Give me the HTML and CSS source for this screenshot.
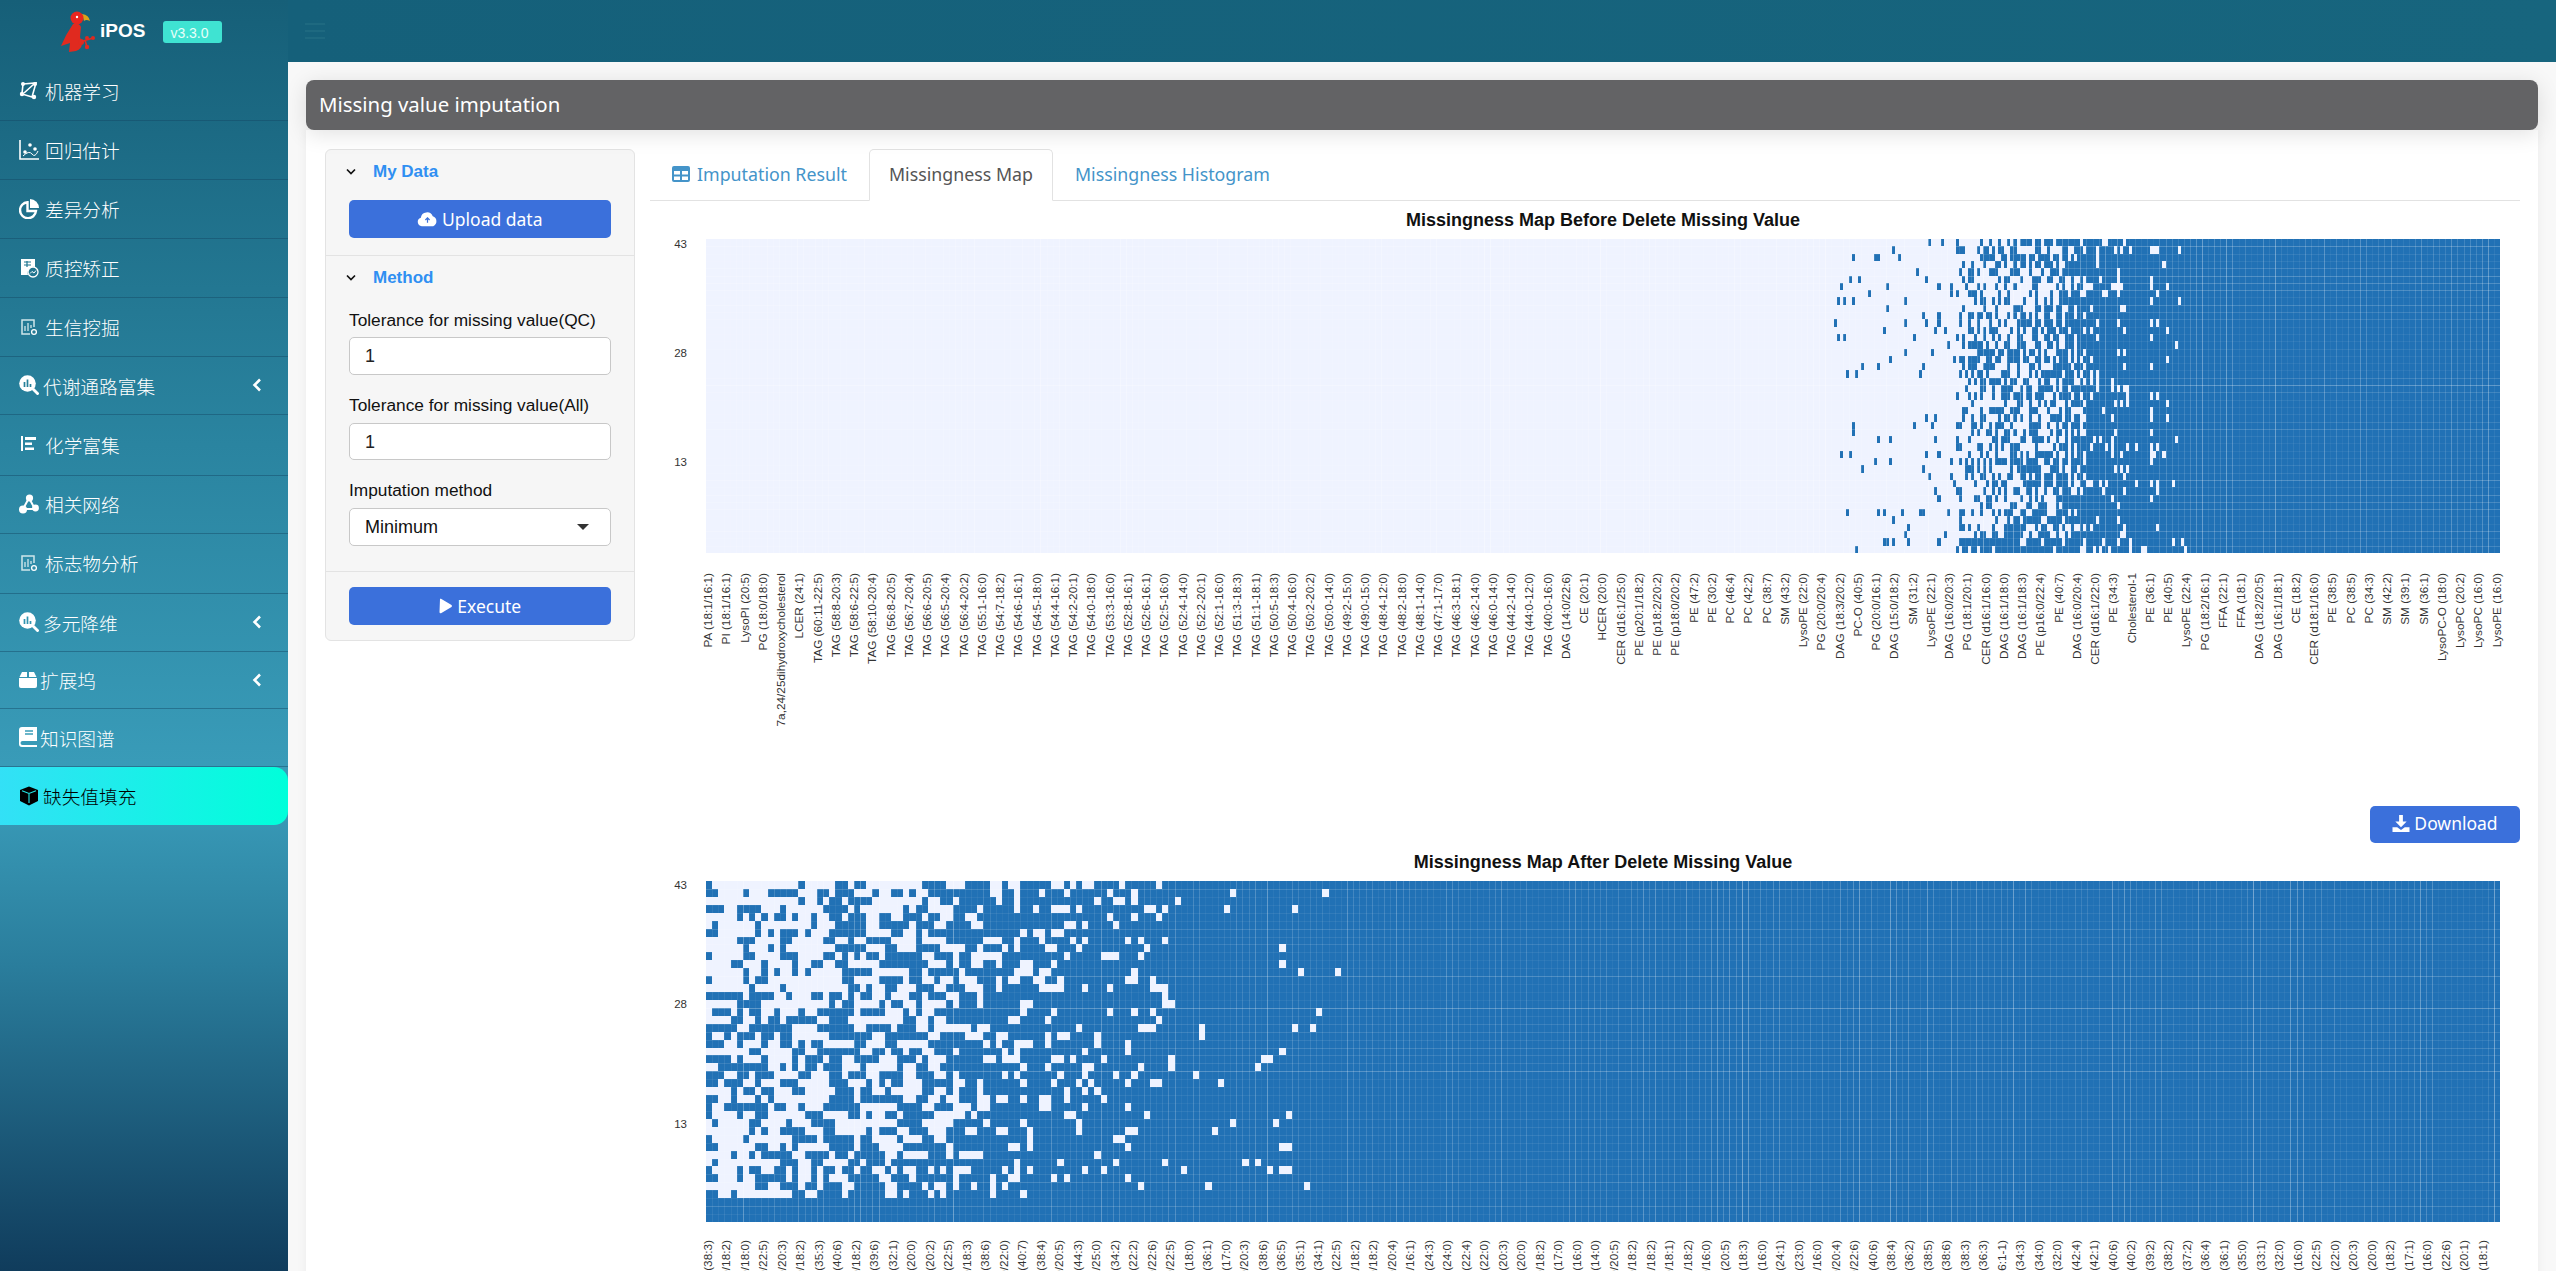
FILE: index.html
```html
<!DOCTYPE html>
<html lang="en">
<head>
<meta charset="utf-8">
<title>iPOS - Missing value imputation</title>
<link rel="stylesheet" href="styles.css">
</head>
<body>
<aside class="side">
  <div class="brand">
    <svg class="parrot" viewBox="0 0 36 42" width="36" height="42"><path d="M22 3 q7 1 8 7 q-4 -2 -6 0z" fill="#d9a21c"/><circle cx="17" cy="7" r="6.500" fill="#e8261f"/><circle cx="17" cy="6" r="1.200" fill="#fff"/><path d="M13 13 q6 -2 8 3 l-1 10 l2 6 q0 6 -6 8 l-7 1 l1 -9 l-9 3 q5 -12 12 -22z" fill="#e02a1f"/><path d="M20 31 L33 27 M25 29 L27 36" stroke="#e02a1f" stroke-width="1.600"/><circle cx="21" cy="31" r="3" fill="#e02a1f"/><circle cx="27" cy="27" r="2" fill="#e02a1f"/><circle cx="33" cy="27" r="2" fill="#e02a1f"/><circle cx="27" cy="36" r="2.200" fill="#e02a1f"/></svg>
    <span class="brand-name">iPOS</span>
    <span class="badge">v3.3.0</span>
  </div>
  <nav class="menu">
    <a class="item"><svg class="ico" viewBox="0 0 20 20"><path d="M4 3 L17 2 L13 16 L3 13z M15 3 L5 12" fill="none" stroke="#fff" stroke-width="1.600"/><circle cx="4" cy="3" r="2" fill="#fff"/><circle cx="16" cy="3" r="2" fill="#fff"/><circle cx="3" cy="13" r="2.200" fill="#fff"/><circle cx="15" cy="16" r="2.200" fill="#fff"/></svg><span>机器学习</span></a>
    <a class="item"><svg class="ico" viewBox="0 0 20 20"><path d="M1 0 V19 H20" fill="none" stroke="#fff" stroke-width="1.600"/><circle cx="6" cy="12" r="1.800" fill="#fff"/><circle cx="11" cy="5" r="1.800" fill="#fff"/><circle cx="16" cy="9" r="1.800" fill="#fff"/><path d="M4 16 Q10 10 13 14 T19 11" fill="none" stroke="#fff" stroke-width="1"/></svg><span>回归估计</span></a>
    <a class="item"><svg class="ico" viewBox="0 0 20 20"><path d="M8.500 3.200 A8 8 0 1 0 17 12 H8.500z" fill="none" stroke="#fff" stroke-width="2.400"/><path d="M11 0 A9 9 0 0 1 20 9 H11z" fill="#fff"/></svg><span>差异分析</span></a>
    <a class="item"><svg class="ico" viewBox="0 0 20 20"><path d="M2 1 H16 V9 A6 6 0 0 0 9 17 H2z" fill="#fff"/><path d="M5 4 H12 M5 7 H12 M8 3 V9" stroke="#1f7690" stroke-width="1.200"/><circle cx="14" cy="14" r="5" fill="none" stroke="#fff" stroke-width="1.300"/><path d="M11 15.500 L13 13.500 L15 15 L17 12.500" fill="none" stroke="#fff" stroke-width="1"/></svg><span>质控矫正</span></a>
    <a class="item"><svg class="ico" viewBox="0 0 20 20"><path d="M15 10 V3 H3 V17 H11" fill="none" stroke="#cfe6ea" stroke-width="1.500"/><path d="M6 9 V14 M9 6 V14 M12 8 V11" stroke="#cfe6ea" stroke-width="1.300"/><circle cx="15" cy="15" r="2.400" fill="none" stroke="#fff" stroke-width="1.300"/></svg><span>生信挖掘</span></a>
    <a class="item short t43"><svg class="ico" viewBox="0 0 20 20"><circle cx="8.500" cy="8.500" r="8.300" fill="#fff"/><path d="M5.500 7 V12 M8.500 4.500 V12 M11.500 9 V12" stroke="#26809a" stroke-width="1.700"/><path d="M14 14 L19.500 19.500" stroke="#fff" stroke-width="2.800"/></svg><span>代谢通路富集</span><svg class="chev" viewBox="0 0 10 14"><path d="M8 1.500 L2.500 7 L8 12.500" fill="none" stroke="#fff" stroke-width="2.600"/></svg></a>
    <a class="item tall"><svg class="ico" viewBox="0 0 20 20"><path d="M2 2 H4 V17 H2z M6 3 H17 V6 H6z M6 8.500 H13 V11 H6z M6 13.500 H15 V16 H6z" fill="#fff"/></svg><span>化学富集</span></a>
    <a class="item short"><svg class="ico" viewBox="0 0 20 20"><path d="M10 4 L4 15 H16z" fill="none" stroke="#fff" stroke-width="2"/><circle cx="10.500" cy="4" r="3.600" fill="#fff"/><circle cx="4" cy="15.500" r="4" fill="#fff"/><circle cx="16.500" cy="14" r="3.400" fill="#fff"/></svg><span>相关网络</span></a>
    <a class="item tall"><svg class="ico" viewBox="0 0 20 20"><path d="M15 10 V3 H3 V17 H11" fill="none" stroke="#cfe6ea" stroke-width="1.500"/><path d="M6 9 V14 M9 6 V14 M12 8 V11" stroke="#cfe6ea" stroke-width="1.300"/><circle cx="15" cy="15" r="2.400" fill="none" stroke="#fff" stroke-width="1.300"/></svg><span>标志物分析</span></a>
    <a class="item short t43"><svg class="ico" viewBox="0 0 20 20"><circle cx="8.500" cy="8.500" r="8.300" fill="#fff"/><path d="M5.500 7 V12 M8.500 4.500 V12 M11.500 9 V12" stroke="#3194b0" stroke-width="1.700"/><path d="M14 14 L19.500 19.500" stroke="#fff" stroke-width="2.800"/></svg><span>多元降维</span><svg class="chev" viewBox="0 0 10 14"><path d="M8 1.500 L2.500 7 L8 12.500" fill="none" stroke="#fff" stroke-width="2.600"/></svg></a>
    <a class="item shorter t41"><svg class="ico wide" viewBox="0 0 18 18"><path d="M3 1 H8 V6 H0.500z M10 1 H15 L17.500 6 H10z M0 7 H18 V15 a2 2 0 0 1 -2 2 H2 a2 2 0 0 1 -2 -2z" fill="#fff"/></svg><span>扩展坞</span><svg class="chev" viewBox="0 0 10 14"><path d="M8 1.500 L2.500 7 L8 12.500" fill="none" stroke="#fff" stroke-width="2.600"/></svg></a>
    <a class="item short t41"><svg class="ico wide" viewBox="0 0 18 20"><path d="M3 0 H18 V14 H3.500 a2 2 0 0 0 0 4 H18 V20 H3 a3 3 0 0 1 -3 -3 V3 a3 3 0 0 1 3 -3z" fill="#fff"/><path d="M6 4 H14 M6 7 H14" stroke="#3a9db9" stroke-width="1.400"/></svg><span>知识图谱</span></a>
    <a class="item active t43"><svg class="ico" viewBox="0 0 20 20"><path d="M10 0.500 L19 4 V15 L10 19.500 L1 15 V4z" fill="#000"/><path d="M3 4.800 L10 7.500 L17 4.800 M10 7.500 V17" fill="none" stroke="#23e8e8" stroke-width="1.100"/></svg><span>缺失值填充</span></a>
  </nav>
</aside>

<main class="main">
  <header class="topbar"><div class="burger"><i></i><i></i><i></i></div></header>
  <div class="page">
    <h1 class="page-title">Missing value imputation</h1>
    <section class="card">
      <div class="panel">
        <div class="acc">
          <div class="acc-head"><svg class="caret" viewBox="0 0 10 8"><path d="M1 1.500 L5 5.500 L9 1.500" fill="none" stroke="#111" stroke-width="1.700"/></svg><span>My Data</span></div>
          <button class="btn btn-full"><svg class="btn-ico" viewBox="0 0 22 16"><path d="M5 15.500 a4.500 4.500 0 0 1 -1 -8.800 a6.500 6.500 0 0 1 12.500 -1.500 a5.500 5.500 0 0 1 0.500 10.300z" fill="#fff"/><path d="M11 12 V7 M8.800 9 L11 6.800 L13.200 9" fill="none" stroke="#3b70db" stroke-width="1.300"/></svg>Upload data</button>
        </div>
        <div class="acc acc-method">
          <div class="acc-head"><svg class="caret" viewBox="0 0 10 8"><path d="M1 1.500 L5 5.500 L9 1.500" fill="none" stroke="#111" stroke-width="1.700"/></svg><span>Method</span></div>
          <label class="lbl">Tolerance for missing value(QC)</label>
          <div class="field">1</div>
          <label class="lbl">Tolerance for missing value(All)</label>
          <div class="field">1</div>
          <label class="lbl">Imputation method</label>
          <div class="field select">Minimum<b class="tri"></b></div>
        </div>
        <div class="acc acc-run">
          <button class="btn btn-full"><svg class="btn-ico play" viewBox="0 0 14 16"><path d="M1.500 1 Q1 0.500 2.500 0.800 L13 7 Q14 8 13 9 L2.500 15.200 Q1 15.500 1 14z" fill="#fff"/></svg>Execute</button>
        </div>
      </div>

      <div class="results">
        <div class="tabs">
          <a class="tab"><svg class="tab-ico" viewBox="0 0 18 16"><rect width="18" height="16" rx="2" fill="#4494c9"/><path d="M2 5 H8 V8.500 H2z M10 5 H16 V8.500 H10z M2 10.500 H8 V14 H2z M10 10.500 H16 V14 H10z" fill="#fff"/></svg>Imputation Result</a>
          <a class="tab on">Missingness Map</a>
          <a class="tab">Missingness Histogram</a>
        </div>

        <h2 class="chart-title">Missingness Map Before Delete Missing Value</h2>
        <div class="chart-row">
          <div class="ticks t-a"><span>43</span><span>28</span><span>13</span></div>
          <canvas id="before" class="heat" width="1794" height="314"></canvas>
        </div>
        <div class="labels l-a">
          <i>PA (18:1/16:1)</i><i>PI (18:1/16:1)</i><i>LysoPI (20:5)</i><i>PG (18:0/18:0)</i><i>7a,24/25dihydroxycholesterol</i><i>LCER (24:1)</i><i>TAG (60:11-22:5)</i><i>TAG (58:8-20:3)</i><i>TAG (58:6-22:5)</i><i>TAG (58:10-20:4)</i><i>TAG (56:8-20:5)</i><i>TAG (56:7-20:4)</i><i>TAG (56:6-20:5)</i><i>TAG (56:5-20:4)</i><i>TAG (56:4-20:2)</i><i>TAG (55:1-16:0)</i><i>TAG (54:7-18:2)</i><i>TAG (54:6-16:1)</i><i>TAG (54:5-18:0)</i><i>TAG (54:4-16:1)</i><i>TAG (54:2-20:1)</i><i>TAG (54:0-18:0)</i><i>TAG (53:3-16:0)</i><i>TAG (52:8-16:1)</i><i>TAG (52:6-16:1)</i><i>TAG (52:5-16:0)</i><i>TAG (52:4-14:0)</i><i>TAG (52:2-20:1)</i><i>TAG (52:1-16:0)</i><i>TAG (51:3-18:3)</i><i>TAG (51:1-18:1)</i><i>TAG (50:5-18:3)</i><i>TAG (50:4-16:0)</i><i>TAG (50:2-20:2)</i><i>TAG (50:0-14:0)</i><i>TAG (49:2-15:0)</i><i>TAG (49:0-15:0)</i><i>TAG (48:4-12:0)</i><i>TAG (48:2-18:0)</i><i>TAG (48:1-14:0)</i><i>TAG (47:1-17:0)</i><i>TAG (46:3-18:1)</i><i>TAG (46:2-14:0)</i><i>TAG (46:0-14:0)</i><i>TAG (44:2-14:0)</i><i>TAG (44:0-12:0)</i><i>TAG (40:0-16:0)</i><i>DAG (14:0/22:6)</i><i>CE (20:1)</i><i>HCER (20:0)</i><i>CER (d16:1/25:0)</i><i>PE (p20:1/18:2)</i><i>PE (p18:2/20:2)</i><i>PE (p18:0/20:2)</i><i>PE (47:2)</i><i>PE (30:2)</i><i>PC (46:4)</i><i>PC (42:2)</i><i>PC (38:7)</i><i>SM (43:2)</i><i>LysoPE (22:0)</i><i>PG (20:0/20:4)</i><i>DAG (18:3/20:2)</i><i>PC-O (40:5)</i><i>PG (20:0/16:1)</i><i>DAG (15:0/18:2)</i><i>SM (31:2)</i><i>LysoPE (22:1)</i><i>DAG (16:0/20:3)</i><i>PG (18:1/20:1)</i><i>CER (d16:1/16:0)</i><i>DAG (16:1/18:0)</i><i>DAG (16:1/18:3)</i><i>PE (p16:0/22:4)</i><i>PE (40:7)</i><i>DAG (16:0/20:4)</i><i>CER (d16:1/22:0)</i><i>PE (34:3)</i><i>Cholesterol-1</i><i>PE (36:1)</i><i>PE (40:5)</i><i>LysoPE (22:4)</i><i>PG (18:2/16:1)</i><i>FFA (22:1)</i><i>FFA (18:1)</i><i>DAG (18:2/20:5)</i><i>DAG (16:1/18:1)</i><i>CE (18:2)</i><i>CER (d18:1/16:0)</i><i>PE (38:5)</i><i>PC (38:5)</i><i>PC (34:3)</i><i>SM (42:2)</i><i>SM (39:1)</i><i>SM (36:1)</i><i>LysoPC-O (18:0)</i><i>LysoPC (20:2)</i><i>LysoPC (16:0)</i><i>LysoPE (16:0)</i>
        </div>

        <div class="dl-row"><button class="btn btn-dl"><svg class="btn-ico dl" viewBox="0 0 18 18"><path d="M7 0 H11 V7 H15 L9 13 L3 7 H7z M0 13 H5 L9 16 L13 13 H18 V18 H0z" fill="#fff"/></svg>Download</button></div>

        <h2 class="chart-title">Missingness Map After Delete Missing Value</h2>
        <div class="chart-row">
          <div class="ticks t-b"><span>43</span><span>28</span><span>13</span></div>
          <canvas id="after" class="heat" width="1794" height="341"></canvas>
        </div>
        <div class="labels l-b">
          <i>PE (38:3)</i><i>PE (16:0/18:2)</i><i>PE (18:0/18:0)</i><i>PE (16:0/22:5)</i><i>PE (18:0/20:3)</i><i>PC (16:0/18:2)</i><i>PC (35:3)</i><i>PC (40:6)</i><i>PC (18:0/18:2)</i><i>PC (39:6)</i><i>PC (32:1)</i><i>LPC (20:0)</i><i>LPC (20:2)</i><i>LPC (22:5)</i><i>PC (16:0/18:3)</i><i>PC (38:6)</i><i>PC (18:0/22:0)</i><i>PC (40:7)</i><i>PC (38:4)</i><i>PC (16:0/20:5)</i><i>SM (44:3)</i><i>CER (d18:1/25:0)</i><i>SM (34:2)</i><i>LPE (22:2)</i><i>PE (16:0/22:6)</i><i>PE (18:0/22:5)</i><i>LPE (18:0)</i><i>SM (36:1)</i><i>LPC (17:0)</i><i>PC (18:0/20:3)</i><i>PE (38:6)</i><i>PC (36:5)</i><i>PC (35:1)</i><i>PC (34:1)</i><i>LPC (22:5)</i><i>PE (18:1/18:2)</i><i>PE (18:0/18:2)</i><i>PE (16:0/20:4)</i><i>PE (18:1/16:1)</i><i>SM (24:3)</i><i>CE (24:0)</i><i>CE (22:4)</i><i>CE (22:0)</i><i>CE (20:3)</i><i>CE (20:0)</i><i>DAG (16:0/18:2)</i><i>CE (17:0)</i><i>CE (16:0)</i><i>CE (14:0)</i><i>DAG (16:0/20:5)</i><i>DAG (18:0/18:2)</i><i>DAG (18:1/18:2)</i><i>DAG (16:0/18:1)</i><i>DAG (18:2/18:2)</i><i>DAG (18:0/16:0)</i><i>FFA (20:5)</i><i>FFA (18:3)</i><i>FFA (16:0)</i><i>FFA (24:1)</i><i>FFA (23:0)</i><i>CER (d18:1/16:0)</i><i>PE (18:0/20:4)</i><i>PE (16:0/22:6)</i><i>PE (40:6)</i><i>PE (38:4)</i><i>PE (36:2)</i><i>PE (38:5)</i><i>PC (38:6)</i><i>PC (38:3)</i><i>PC (36:3)</i><i>CER (d16:1-1)</i><i>PC (34:3)</i><i>PC (34:0)</i><i>PC (32:0)</i><i>PC (42:4)</i><i>PC (42:1)</i><i>PC (40:6)</i><i>PC (40:2)</i><i>PC (39:2)</i><i>PC (38:2)</i><i>PC (37:2)</i><i>PC (36:4)</i><i>PC (36:1)</i><i>PC (35:0)</i><i>PC (33:1)</i><i>PC (32:0)</i><i>LPE (16:0)</i><i>LPC (22:5)</i><i>LPC (22:0)</i><i>LPC (20:3)</i><i>LPC (20:0)</i><i>LPC (18:2)</i><i>LPC (17:1)</i><i>LPC (16:0)</i><i>LPE (22:6)</i><i>LPE (20:1)</i><i>LPE (18:1)</i>
        </div>
      </div>
    </section>
  </div>
</main>
<script src="heat.js"></script>
</body>
</html>
```

FILE: styles.css
```css
* { box-sizing: border-box; }
html, body { height: 100%; margin: 0; overflow: hidden; }
body {
  display: flex;
  background: #f8f8f8;
  font-family: "Liberation Sans", Arial, "Noto Sans CJK SC", sans-serif;
  color: #111;
}

/* sidebar */
.side {
  width: 288px;
  flex: none;
  height: 100%;
  background: linear-gradient(180deg, #165f78 0%, #2a84a0 35%, #3a9dba 62%, #2a7d9c 76%, #103c5c 100%);
}
.brand {
  height: 62px;
  display: flex;
  align-items: center;
  padding-left: 60px;
}
.parrot { flex: none; margin-top: 2px; }
.brand-name { margin-left: 4px; color: #fff; font-weight: 700; font-size: 19px; }
.badge {
  margin-left: 18px;
  width: 59px;
  height: 22px;
  padding-left: 7px;
  margin-top: 2px;
  border-radius: 3px;
  background: #3fe3d2;
  color: #e6fffa;
  font-size: 14px;
  line-height: 24px;
}
.menu { display: flex; flex-direction: column; }
.item {
  height: 59px;
  display: flex;
  align-items: center;
  padding-left: 19px;
  padding-bottom: 1px;
  gap: 6px;
  color: #fff;
  font-family: "Noto Sans CJK SC", sans-serif;
  font-size: 18.700px;
  font-weight: 300;
  border-bottom: 1px solid rgba(20, 70, 100, .45);
}
.item.short { height: 58px; }
.item.shorter { height: 57px; }
.item.tall { height: 60.500px; }
.item.t43 { gap: 4px; }
.item.t41 { gap: 3px; }
.ico { width: 20px; height: 20px; flex: none; }
.ico.wide { width: 18px; }
.chev { width: 10px; height: 14px; margin-left: auto; margin-right: 26px; flex: none; }
.item.active {
  height: 58px;
  color: #000;
  background: linear-gradient(90deg, #33e0f6, #00ffda);
  border-radius: 0 14px 14px 0;
  border-bottom: 0;
}

/* main */
.main { flex: 1; min-width: 0; display: flex; flex-direction: column; }
.topbar {
  height: 62px;
  flex: none;
  background: linear-gradient(90deg, #15607a, #17657e);
  display: flex;
  align-items: center;
  padding-left: 17px;
}
.burger { display: flex; flex-direction: column; gap: 5px; width: 20px; }
.burger i { display: block; height: 2px; background: #1e6980; }
.page { padding: 18px 18px 0; }
.page-title {
  margin: 0;
  height: 50px;
  padding-left: 13px;
  background: #636365;
  border-radius: 8px;
  color: #fff;
  font-family: "Noto Sans", sans-serif;
  font-size: 20.400px;
  font-weight: 400;
  line-height: 49px;
  box-shadow: 0 4px 22px rgba(0, 0, 0, .12);
  position: relative;
}
.card {
  background: #fff;
  display: flex;
  align-items: flex-start;
  padding: 19px 18px 0 19px;
  gap: 15.500px;
  height: 1200px;
  box-shadow: 0 0 10px rgba(0, 0, 0, .06);
}

/* panel */
.panel {
  width: 309.500px;
  flex: none;
  background: #f6f6f6;
  border: 1px solid #e3e3e3;
  border-radius: 6px;
}
.acc { padding: 0 23px; border-bottom: 1px solid #e3e3e3; }
.acc:last-child { border-bottom: 0; }
.acc-head {
  height: 50px;
  display: flex;
  align-items: center;
  gap: 17px;
  margin-left: -3px;
  padding-bottom: 6px;
  color: #2f8ff2;
  font-weight: 700;
  font-size: 17px;
}
.caret { width: 10px; height: 8px; flex: none; }
.acc:first-child { padding-bottom: 17px; }
.acc-method .acc-head { height: 44px; padding-bottom: 0; }
.acc-method { padding-bottom: 25px; }
.lbl { display: block; font-size: 17.300px; line-height: 20px; margin: 8px 0; }
.field + .lbl { margin-top: 20px; }
.acc-method .acc-head + .lbl { margin-top: 10px; margin-bottom: 7px; }
.field {
  height: 37.500px;
  border: 1px solid #c8c8c8;
  border-radius: 5px;
  background: #fff;
  padding-left: 15px;
  font-size: 18px;
  line-height: 36px;
  color: #222;
}
.field.select { display: flex; justify-content: space-between; align-items: center; padding-right: 21px; color: #111; }
.tri { border: 6px solid transparent; border-top: 6px solid #333; border-bottom: 0; width: 0; height: 0; }
.acc-run { padding-top: 15px; padding-bottom: 15px; }
.btn {
  border: 0;
  border-radius: 5px;
  background: #3b70db;
  color: #fff;
  font-family: "Noto Sans", sans-serif;
  font-size: 17.500px;
  height: 38px;
  display: flex;
  align-items: center;
  justify-content: center;
  gap: 4px;
  padding: 0;
}
.btn-full { width: 100%; }
.btn-ico { width: 21px; height: 16px; flex: none; }
.btn-ico.play { width: 15px; }
.btn-ico.dl { width: 18px; height: 17px; }
.btn-dl { width: 150px; height: 37px; padding-bottom: 2px; }

/* tabs */
.results { flex: 1; min-width: 0; }
.tabs {
  height: 52px;
  display: flex;
  border-bottom: 1px solid #e2e2e2;
  padding-left: 22px;
}
.tab {
  height: 52px;
  display: flex;
  align-items: center;
  gap: 7px;
  padding: 0 20px 3px 0;
  margin-right: 2px;
  color: #4494c9;
  font-family: "Noto Sans", sans-serif;
  font-size: 17.800px;
}
.tab.on {
  color: #555;
  background: #fff;
  padding: 0 19px 3px;
  margin-right: 22px;
  border: 1px solid #e2e2e2;
  border-bottom-color: #fff;
  border-radius: 5px 5px 0 0;
}
.tab-ico { width: 18px; height: 16px; flex: none; }

/* charts */
.chart-title {
  margin: 9px 0 9px 56px;
  width: 1794px;
  text-align: center;
  font-size: 18px;
  line-height: 20px;
  font-weight: 700;
  color: #111;
}
.chart-row { display: flex; gap: 19px; }
.ticks {
  width: 37px;
  flex: none;
  display: flex;
  flex-direction: column;
  align-items: flex-end;
  font-size: 11.500px;
  color: #333;
}
.ticks span { line-height: 10px; height: 10px; }
.t-a { gap: 99px; }
.t-b { gap: 109.500px; margin-top: -1px; }
.heat { display: block; width: 1794px; flex: none; }
.labels {
  display: flex;
  align-items: flex-start;
  margin-left: 49px;
  color: #333;
  font-size: 11.800px;
}
.labels i {
  font-style: normal;
  display: block;
  flex: none;
  white-space: nowrap;
  writing-mode: vertical-rl;
  transform: rotate(180deg);
}
.l-a { height: 232.500px; margin-top: 20px; }
.l-a i { width: 18.250px; line-height: 18.250px; }
.l-b { margin-top: 18px; }
.l-b i { width: 18.490px; line-height: 18.490px; }
.dl-row { display: flex; justify-content: flex-end; margin-bottom: 1.500px; }
```

FILE: heat.js
```js
// Draws the two missingness heat maps on their canvases.
(function () {
  var BLUE = "#2171b5", PALE = "#eff3ff";

  function rng(seed) {
    return function () {
      seed |= 0; seed = seed + 0x6D2B79F5 | 0;
      var t = Math.imul(seed ^ seed >>> 15, 1 | seed);
      t = t + Math.imul(t ^ t >>> 7, 61 | t) ^ t;
      return ((t ^ t >>> 14) >>> 0) / 4294967296;
    };
  }
  function interp(pts, x) {
    if (x <= pts[0][0]) return pts[0][1];
    for (var i = 1; i < pts.length; i++) {
      if (x <= pts[i][0]) {
        var a = pts[i - 1], b = pts[i];
        return a[1] + (b[1] - a[1]) * (x - a[0]) / (b[0] - a[0]);
      }
    }
    return pts[pts.length - 1][1];
  }

  function draw(id, cols, rows, seed, seamStep, isBlue) {
    var c = document.getElementById(id), g = c.getContext("2d");
    var W = c.width, H = c.height, cw = W / cols, rh = H / rows, r = rng(seed);
    g.fillStyle = PALE;
    g.fillRect(0, 0, W, H);
    var colF = [], i, j;
    for (i = 0; i < cols; i++) colF.push(0.7 + r() * 0.6);
    g.fillStyle = BLUE;
    for (j = 0; j < rows; j++) {
      var rowF = 0.85 + r() * 0.3, prev = true;
      for (i = 0; i < cols; i++) {
        prev = isBlue(706 + (i + 0.5) * cw, rows - 1 - j, colF[i] * rowF, r, prev);
        if (prev) {
          var x0 = Math.round(i * cw), x1 = Math.round((i + 1) * cw);
          var y0 = Math.round(j * rh), y1 = Math.round((j + 1) * rh);
          g.fillRect(x0, y0, x1 - x0, y1 - y0);
        }
      }
    }
    // light seams between cells left by the image's downscaling
    for (i = seamStep; i < cols; i += seamStep) {
      g.fillStyle = "rgba(255,255,255," + (0.04 + r() * r() * 0.36).toFixed(3) + ")";
      g.fillRect(Math.round(i * cw), 0, 1, H);
    }
    for (j = 1; j < rows; j++) {
      g.fillStyle = "rgba(255,255,255," + (0.05 + r() * r() * 0.25).toFixed(3) + ")";
      g.fillRect(0, Math.round(j * rh), W, 1);
    }
  }

  var beforeCurve = [[1809, 0], [1845, .03], [1950, .07], [1965, .3], [2021, .5], [2040, .65], [2119, .88], [2150, .95], [2176, .985], [2186, 1]];
  draw("before", 590, 43, 77, 2, function (x, fromBottom, f, r) {
    var p = interp(beforeCurve, x);
    if (p >= 1) return true;
    if (fromBottom < 2 && x > 1960) return r() < 0.85;
    if (fromBottom < 6 && x < 1900) p *= 0.5;
    if (fromBottom > 36 && x < 1850) return false;
    return r() < p * f;
  });

  // Share of pale cells by position; runs of pale cells keep the same average share.
  var afterCurve = [[706, .93], [726, .85], [735, .62], [802, .56], [884, .46], [962, .34], [1047, .17], [1140, .1], [1210, .065], [1292, .045], [1340, .025], [1346, 0]];
  draw("after", 291, 43, 4242, 1, function (x, fromBottom, f, r, prev) {
    if (fromBottom < 3) return true;
    var t = Math.min(0.96, interp(afterCurve, x) * f);
    if (t <= 0) return true;
    var stay = Math.min(0.97, t + 0.08);
    var p = prev ? t * (1 - stay) / (1 - t) : stay;
    return r() >= p;
  });
})();
```
